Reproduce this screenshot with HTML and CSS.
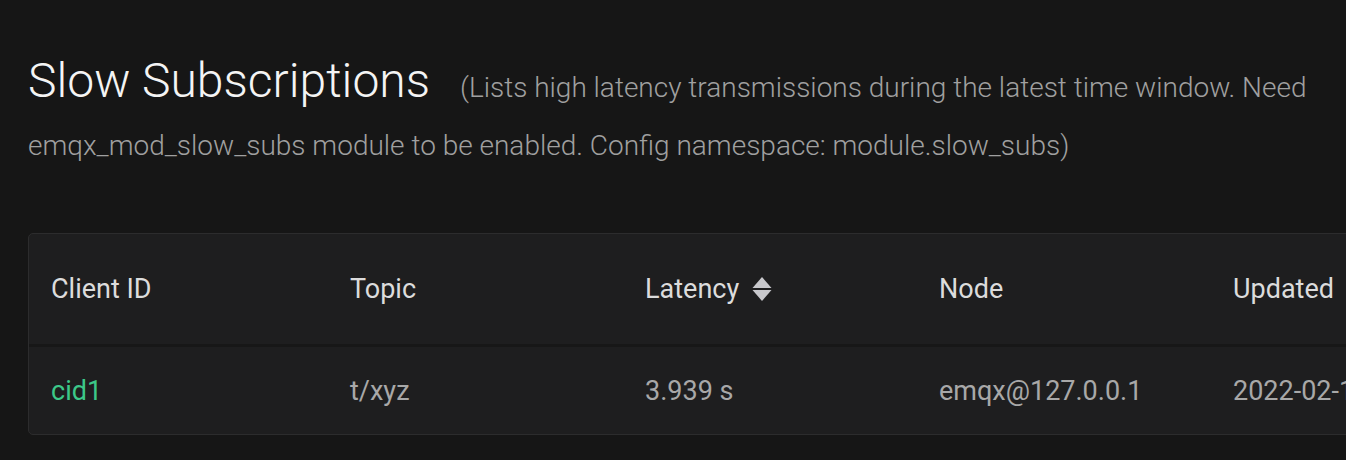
FILE: index.html
```html
<!DOCTYPE html>
<html>
<head>
<meta charset="utf-8">
<link rel="stylesheet" href="styles.css">
</head>
<body>
<div class="page">
  <div class="heading">
    <span class="title">Slow Subscriptions</span>
    <span class="subtitle">(Lists high latency transmissions during the latest time window. Need emqx_mod_slow_subs module to be enabled. Config namespace: module.slow_subs)</span>
  </div>
  <div class="card">
    <table class="grid">
      <colgroup>
        <col class="c1"><col class="c2"><col class="c3"><col class="c4"><col class="c5">
      </colgroup>
      <thead>
        <tr>
          <th>Client ID</th>
          <th>Topic</th>
          <th><span class="sortable">Latency
            <svg class="sort" width="20" height="24" viewBox="0 0 20 24"><path d="M10 0 L19.5 11 L0.5 11 Z" fill="#c8c8cc"/><path d="M0.5 13 L19.5 13 L10 24 Z" fill="#c8c8cc"/></svg>
          </span></th>
          <th>Node</th>
          <th>Updated</th>
        </tr>
      </thead>
      <tbody>
        <tr>
          <td class="link">cid1</td>
          <td>t/xyz</td>
          <td>3.939 s</td>
          <td>emqx@127.0.0.1</td>
          <td>2022-02-16 10:20:30</td>
        </tr>
      </tbody>
    </table>
  </div>
</div>
</body>
</html>
```
FILE: styles.css
```css
html, body {
  margin: 0;
  padding: 0;
  background: #161616;
  overflow: hidden;
}
body {
  font-family: Roboto, "Liberation Sans", sans-serif;
  width: 1346px;
  height: 460px;
}
.page {
  padding: 57px 0 0 28px;
}
.heading {
  width: 1300px;
  font-size: 28px;
  line-height: 58px;
}
.title {
  font-size: 48px;
  font-weight: 300;
  line-height: 1;
  color: #f4f4f4;
  margin-right: 23px;
}
.subtitle {
  font-size: 28px;
  font-weight: 300;
  color: #a0a0a0;
}
.card {
  margin-top: 58px;
  width: 1700px;
  background: #1e1e1f;
  border: 1px solid #2c2c2d;
  border-radius: 5px;
  overflow: hidden;
}
.grid {
  border-collapse: collapse;
  table-layout: fixed;
  width: 100%;
}
.c1 { width: 299px; }
.c2 { width: 295px; }
.c3 { width: 294px; }
.c4 { width: 294px; }
.grid th {
  height: 110px;
  padding: 0 22px;
  text-align: left;
  font-weight: 400;
  font-size: 27px;
  color: #dcdcdc;
  border-bottom: 3px solid #171717;
}
.grid td {
  height: 87px;
  padding: 0 22px;
  font-size: 27px;
  color: #a8a8a8;
  white-space: nowrap;
}
.grid td.link {
  color: #3cc888;
}
.sortable {
  display: inline-flex;
  align-items: center;
  gap: 13px;
}
.sort {
  display: block;
}
```
